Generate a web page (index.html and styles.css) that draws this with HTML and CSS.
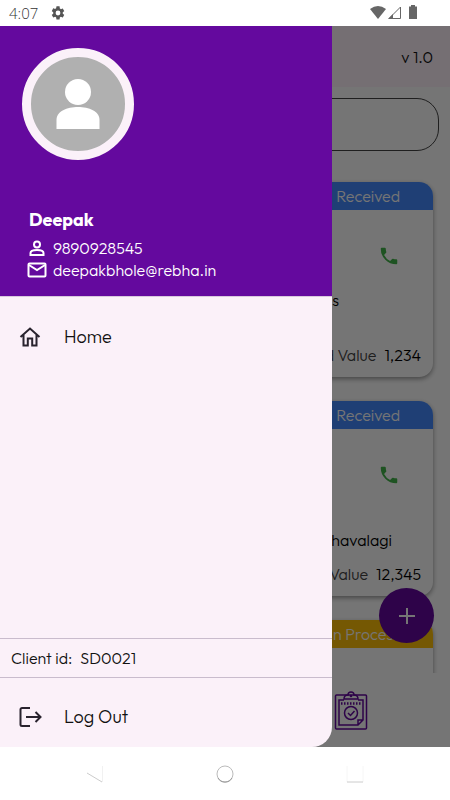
FILE: index.html
```html
<!DOCTYPE html>
<html lang="en">
<head>
<meta charset="utf-8">
<meta name="viewport" content="width=device-width, initial-scale=1">
<title>Orders</title>
<link rel="stylesheet" href="styles.css">
</head>
<body>
<header class="status">
  <span class="clock">4:07</span>
  <svg class="gear" viewBox="0 0 24 24"><path d="M19.14 12.94a7 7 0 0 0 0-1.88l2.03-1.58a.5.5 0 0 0 .12-.61l-1.92-3.32a.5.5 0 0 0-.59-.22l-2.39.96a7 7 0 0 0-1.62-.94l-.36-2.54A.5.5 0 0 0 13.92 2h-3.84a.5.5 0 0 0-.47.41l-.36 2.54a7 7 0 0 0-1.62.94l-2.39-.96a.5.5 0 0 0-.59.22L2.74 8.87a.5.5 0 0 0 .12.61l2.03 1.58a7 7 0 0 0 0 1.88l-2.03 1.58a.5.5 0 0 0-.12.61l1.92 3.32c.12.22.37.29.59.22l2.39-.96a7 7 0 0 0 1.62.94l.36 2.54c.05.24.24.41.48.41h3.84c.24 0 .44-.17.47-.41l.36-2.54a7 7 0 0 0 1.62-.94l2.39.96c.22.08.47 0 .59-.22l1.92-3.32a.5.5 0 0 0-.12-.61zM12 15.6a3.6 3.6 0 1 1 0-7.2 3.6 3.6 0 0 1 0 7.2z"/></svg>
  <svg class="signals" viewBox="0 0 50 16"><path d="M0 4Q8-2 16 4L8 14z"/><path d="M30.500 2v11.500H19z" fill="none" stroke="#666"/><path d="M23 9v5h-5z"/><path d="M41 1.500V0h4v1.500h2V14h-8V1.500z"/></svg>
</header>

<div class="stage">
  <main class="page">
    <div class="topbar"><span>v 1.0</span></div>
    <div class="feed">
      <input class="search" type="search" aria-label="Search orders">
      <article class="card">
        <div class="state">Received</div>
        <div class="body">
          <a class="call" href="#" aria-label="Call"><svg viewBox="0 0 24 24"><path d="M20 15.500c-1.250 0-2.450-.2-3.570-.57a1 1 0 0 0-1.020.24l-2.200 2.200a15 15 0 0 1-6.590-6.590l2.200-2.210a1 1 0 0 0 .25-1A11 11 0 0 1 8.500 4a1 1 0 0 0-1-1H4a1 1 0 0 0-1 1 17 17 0 0 0 17 17 1 1 0 0 0 1-1v-3.500a1 1 0 0 0-1-1z"/></svg></a>
          <div class="place">s</div>
          <div class="value"><span>d Value</span><b>1,234</b></div>
        </div>
      </article>
      <article class="card">
        <div class="state">Received</div>
        <div class="body">
          <a class="call" href="#" aria-label="Call"><svg viewBox="0 0 24 24"><path d="M20 15.500c-1.250 0-2.450-.2-3.570-.57a1 1 0 0 0-1.020.24l-2.200 2.200a15 15 0 0 1-6.590-6.590l2.200-2.210a1 1 0 0 0 .25-1A11 11 0 0 1 8.500 4a1 1 0 0 0-1-1H4a1 1 0 0 0-1 1 17 17 0 0 0 17 17 1 1 0 0 0 1-1v-3.500a1 1 0 0 0-1-1z"/></svg></a>
          <div class="place place-long">havalagi</div>
          <div class="value"><span>Value</span><b>12,345</b></div>
        </div>
      </article>
      <article class="card">
        <div class="state">In Process</div>
        <div class="body"></div>
      </article>
    </div>
    <nav class="tabs">
      <a href="#" aria-label="Orders"><svg viewBox="0 0 34 40" fill="none" stroke="#64089f" stroke-width="1.500"><rect x="1.500" y="4" width="31" height="34" rx="1"/><path d="M10 9H5v25h19l5-5V9h-5M24 34v-5h5M10 8h14c0-3-2-4-4-4a3 3 0 0 0-6 0c-2 0-4 1-4 4z"/><path d="M7 12.500h20" stroke-width="2.500" stroke-dasharray="1.500 1.500"/><circle cx="17" cy="22" r="6.500"/><path d="m14 22 2.500 2.500L20.500 20"/><circle cx="17" cy="5" r=".6"/></svg></a>
    </nav>
    <button class="fab" aria-label="Add order"><svg viewBox="0 0 16 16"><path d="M8 0v16M0 8h16"/></svg></button>
  </main>
  <div class="scrim"></div>

  <aside class="drawer">
    <section class="profile">
      <div class="avatar"><svg viewBox="0 0 44 52"><circle cx="22" cy="14" r="13"/><path d="M.500 51V42C.500 33 11 29 22 29s21.500 4 21.500 13v9z"/></svg></div>
      <h1>Deepak</h1>
      <p><svg viewBox="0 0 20 20"><circle cx="10" cy="6.500" r="3"/><path d="M3.500 17v-2c0-2 3.500-3 6.500-3s6.500 1 6.500 3v2z"/></svg>9890928545</p>
      <p><svg viewBox="0 0 20 20"><rect x="1.500" y="3.500" width="17" height="13" rx="1"/><path d="m2 5 8 5 8-5"/></svg>deepakbhole@rebha.in</p>
    </section>
    <nav class="menu">
      <a class="item" href="#"><svg viewBox="0 0 24 24"><path d="M2.500 12 12 3.500l9.500 8.500M5.500 10v10.500h4.300v-7h4.400v7h4.300V10"/></svg>Home</a>
    </nav>
    <div class="client"><span>Client id:</span><span>SD0021</span></div>
    <a class="item logout" href="#"><svg viewBox="0 0 24 24"><path d="M12 3H4a1.500 1.500 0 0 0-1.500 1.500v15A1.500 1.500 0 0 0 4 21h8M8 12h14M17.500 7l5 5-5 5"/></svg>Log Out</a>
  </aside>
</div>

<footer class="system">
  <button aria-label="Back"><svg viewBox="0 0 18 18"><path d="M1 8l15 9" stroke="#ccc"/><path d="M16.500 1v16" stroke="#f1f1f1"/></svg></button>
  <button aria-label="Home"><svg viewBox="0 0 18 18"><circle cx="9" cy="9" r="8" stroke="#bbb"/><path d="M2 13a8 8 0 0 0 14 0" stroke="#999"/></svg></button>
  <button aria-label="Recent apps"><svg viewBox="0 0 18 18"><path d="M1 1v16M17 1v16" stroke="#f6f6f6"/><path d="M1 17h16" stroke="#ccc"/></svg></button>
</footer>
</body>
</html>
```
FILE: styles.css
```css
* { box-sizing: border-box; }
body {
  margin: 0;
  height: 100vh;
  display: flex;
  flex-direction: column;
  background: #fff;
  color: #111;
  font: 300 16px/20px Outfit, Lato, sans-serif;
}
a { color: inherit; text-decoration: none; }
button { border: 0; padding: 0; background: none; }
svg { display: block; }

.status {
  flex: none;
  height: 26px;
  padding: 0 30px 0 9px;
  display: flex;
  align-items: center;
  color: #333;
  font: 300 15px/26px "Open Sans", sans-serif;
}
.gear { width: 16px; margin-left: 12px; fill: #555; }
.signals { width: 50px; margin-left: auto; fill: #666; }

.stage { flex: 1; min-height: 0; position: relative; overflow: hidden; }
.page { height: 100%; display: flex; flex-direction: column; background: #fff; }
.topbar {
  flex: none;
  height: 61px;
  padding: 0 17px;
  display: flex;
  align-items: center;
  justify-content: flex-end;
  background: #fff2fb;
}
.feed { flex: 1; min-height: 0; overflow: hidden; padding: 11px; }
.search {
  display: block;
  width: 100%;
  height: 53px;
  margin-bottom: 31px;
  padding: 0 20px;
  border: 1px solid #444;
  border-radius: 22px;
  background: transparent;
  font: inherit;
  appearance: none;
}
.card {
  height: 195px;
  margin: 0 6px 24px;
  display: flex;
  flex-direction: column;
  border-radius: 14px;
  overflow: hidden;
  background: #fff;
  box-shadow: 0 2px 5px rgba(0, 0, 0, .4);
}
.state {
  height: 28px;
  padding-right: 33px;
  background: #448aff;
  color: #fff;
  line-height: 28px;
  text-align: right;
}
.card:last-child .state { background: #ffc107; }
.body { flex: 1; padding: 35px 12px 12px; display: flex; flex-direction: column; align-items: flex-end; }
.call { width: 22px; margin-right: 21px; fill: #43b54a; }
.place { margin: auto 82px 35px 0; color: #000; }
.place-long { margin: auto 29px 14px 0; }
.value { display: flex; gap: 8px; color: #444; }
.value b { color: #000; font-weight: 300; }

.tabs { flex: none; height: 74px; padding: 18px 82px; display: flex; justify-content: flex-end; }
.tabs svg { width: 34px; }
.fab {
  position: absolute;
  right: 16px;
  bottom: 104px;
  width: 55px;
  height: 55px;
  display: grid;
  place-items: center;
  border-radius: 50%;
  background: #64089f;
}
.fab svg { width: 16px; stroke: #fff; stroke-width: 2; }
.scrim { position: absolute; inset: 0; background: rgba(0, 0, 0, .54); }

.drawer {
  position: absolute;
  inset: 0 auto 0 0;
  width: 80%;
  max-width: 332px;
  display: flex;
  flex-direction: column;
  overflow: hidden;
  border-radius: 0 0 20px 0;
  background: #fbf1f9;
}
.profile { height: 270px; padding: 22px; background: #64099e; color: #fff; }
.avatar {
  width: 112px;
  height: 112px;
  margin-bottom: 48px;
  display: grid;
  place-items: center;
  border: 9px solid #fbf1f9;
  border-radius: 50%;
  background: #b0b0b0;
}
.avatar svg { width: 44px; fill: #fff; }
.profile h1 { margin: 0 7px 5px; font-size: 18px; line-height: 24px; font-weight: 700; }
.profile p { margin: 0 5px; height: 22px; display: flex; align-items: center; gap: 6px; line-height: 22px; }
.profile p svg { width: 20px; fill: none; stroke: #fff; stroke-width: 2; }
.menu { flex: 1; padding-top: 10px; border-top: 1px solid #d8c8dd; }
.item { height: 60px; padding: 0 18px; display: flex; align-items: center; gap: 22px; font-size: 18px; }
.item svg { width: 24px; fill: none; stroke: #29232e; stroke-width: 2; }
.client {
  height: 40px;
  padding: 0 11px;
  display: flex;
  align-items: center;
  gap: 8px;
  border: solid #c9bccd;
  border-width: 1px 0;
}
.logout { height: 69px; padding-top: 8px; }

.system { flex: none; height: 53px; padding: 0 30px; display: flex; justify-content: space-around; align-items: center; }
.system svg { width: 18px; fill: none; }
```
